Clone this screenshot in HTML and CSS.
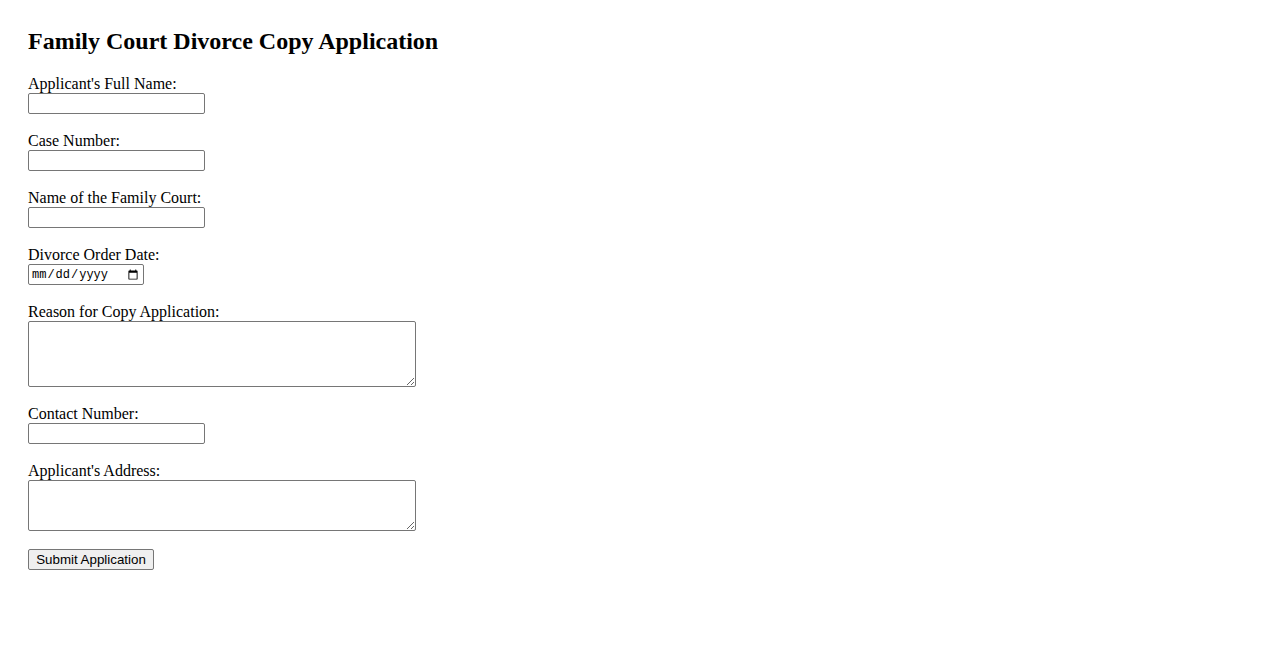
FILE: index.html
```html
<!DOCTYPE html>
<html lang="en">
<head>
<meta charset="utf-8">
<title>Family Court Divorce Copy Application</title>
<link rel="stylesheet" href="styles.css">
</head>
<body>
<div class="page">
  <h2 class="title">Family Court Divorce Copy Application</h2>
  <form class="form">
    <div class="field">
      <label class="label" for="name">Applicant's Full Name:</label>
      <input class="text" type="text" id="name">
    </div>
    <div class="field">
      <label class="label" for="case">Case Number:</label>
      <input class="text" type="text" id="case">
    </div>
    <div class="field">
      <label class="label" for="court">Name of the Family Court:</label>
      <input class="text" type="text" id="court">
    </div>
    <div class="field">
      <label class="label" for="date">Divorce Order Date:</label>
      <input class="date" type="date" id="date">
    </div>
    <div class="field">
      <label class="label" for="reason">Reason for Copy Application:</label>
      <textarea class="area area-4" id="reason"></textarea>
    </div>
    <div class="field">
      <label class="label" for="phone">Contact Number:</label>
      <input class="text" type="text" id="phone">
    </div>
    <div class="field">
      <label class="label" for="address">Applicant's Address:</label>
      <textarea class="area area-3" id="address"></textarea>
    </div>
    <button class="submit" type="submit">Submit Application</button>
  </form>
</div>
</body>
</html>
```

FILE: styles.css
```css
html, body {
  margin: 0;
  padding: 0;
  background: #ffffff;
}
body {
  font-family: "Liberation Serif", "Times New Roman", serif;
  font-size: 16px;
  color: #000000;
}
.page {
  padding: 27px 28px 28px 28px;
}
.title {
  margin: 0 0 20px 0;
  font-size: 24px;
  line-height: 28px;
  font-weight: bold;
}
.form {
  display: flex;
  flex-direction: column;
  align-items: flex-start;
}
.field {
  display: flex;
  flex-direction: column;
  align-items: flex-start;
  margin-bottom: 18px;
}
.label {
  display: block;
  line-height: 18px;
  height: 18px;
}
.text, .date, .area {
  box-sizing: border-box;
  margin: 0;
  border: 1px solid #767676;
  border-radius: 2px;
  background: #ffffff;
  display: block;
}
.text {
  width: 177px;
  height: 21px;
  padding: 1px 2px;
  font-family: "Liberation Sans", Arial, sans-serif;
  font-size: 13.33px;
}
.date {
  width: 116px;
  height: 21px;
  padding: 1px 2px;
  font-family: "Liberation Mono", "DejaVu Sans Mono", monospace;
  font-size: 12px;
  color: #000;
}
.area {
  width: 388px;
  padding: 2px;
  font-family: "Liberation Mono", monospace;
  font-size: 13.33px;
  resize: both;
}
.area-4 {
  height: 66px;
}
.area-3 {
  height: 51px;
}
.submit {
  box-sizing: border-box;
  margin: 0;
  height: 21px;
  width: 126px;
  padding: 1px 6px;
  font-family: "Liberation Sans", Arial, sans-serif;
  font-size: 13.33px;
  color: #000;
  background: #efefef;
  border: 1px solid #767676;
  border-radius: 2px;
}
```
